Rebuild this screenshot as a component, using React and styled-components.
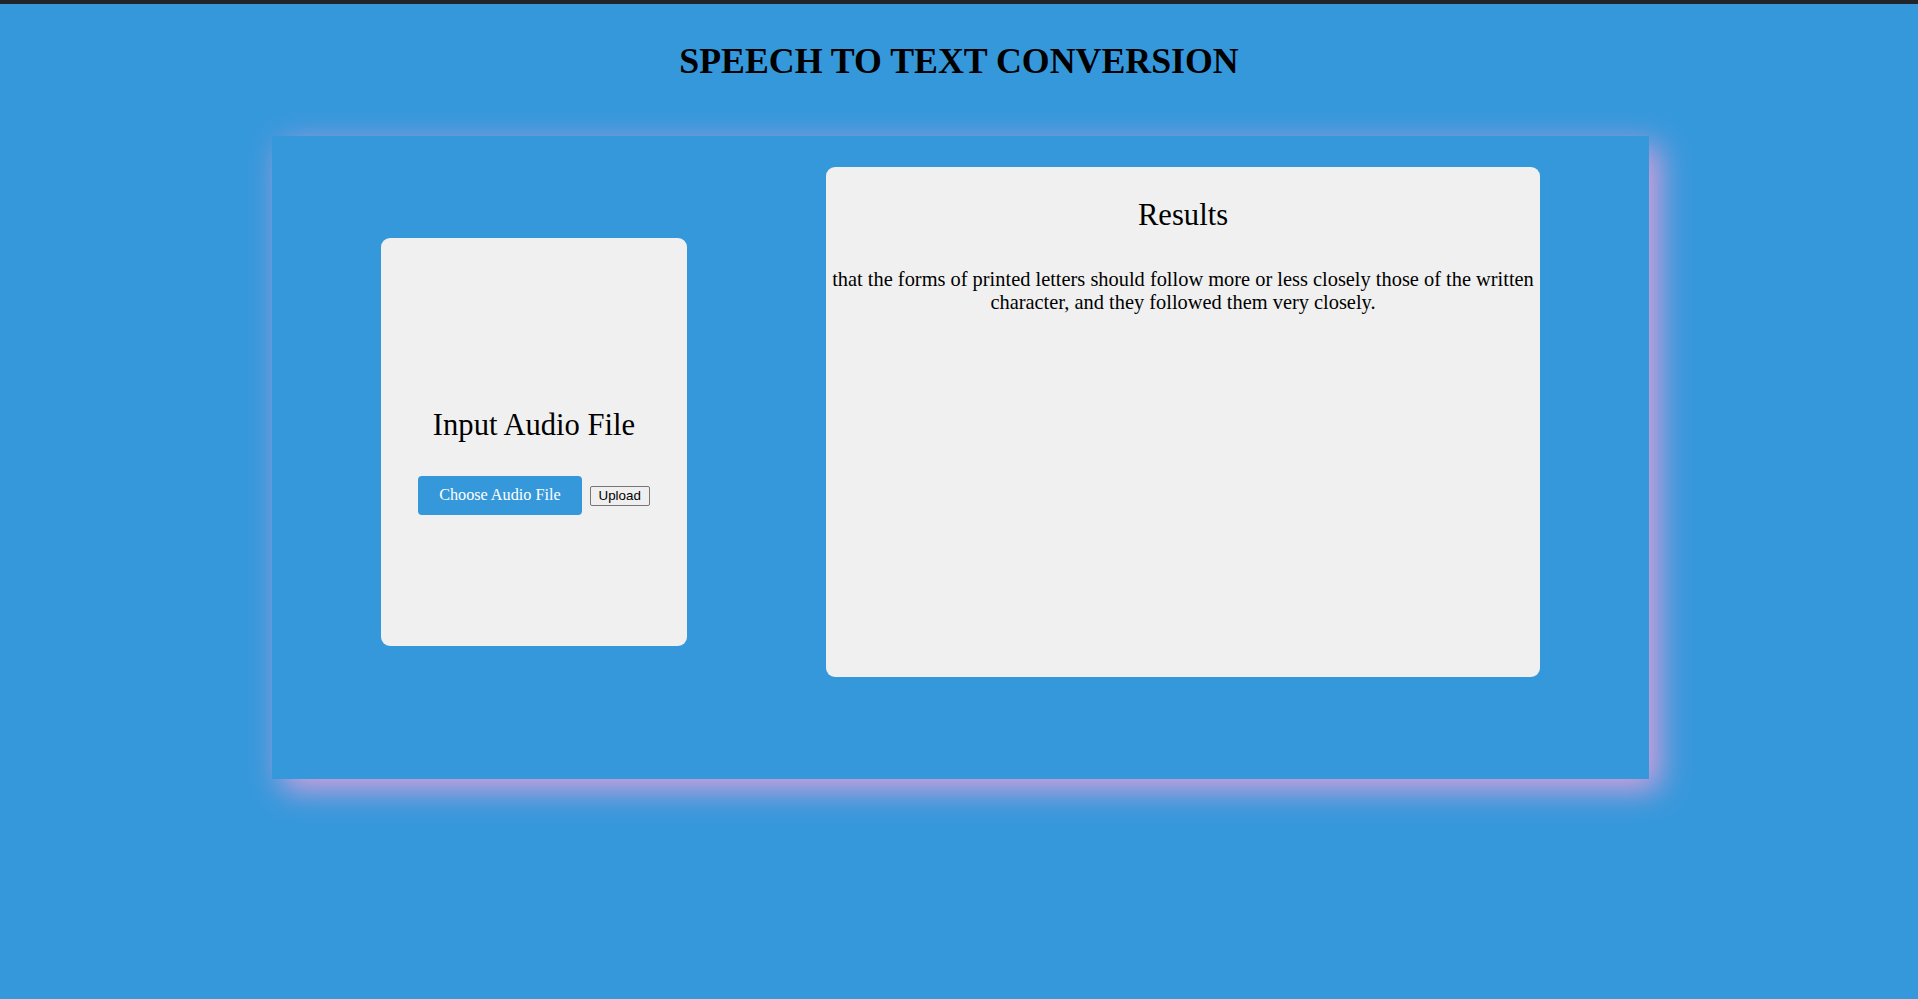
import React, {Component} from 'react'
import styled, {createGlobalStyle} from 'styled-components'

const GlobalStyle = createGlobalStyle`
  html, body {
    margin: 0;
    padding: 0;
    background-color: #3598db;
  }
  body {
    font-family: "Liberation Serif", "Times New Roman", serif;
    color: #000;
  }
`

const StyledPage = styled.div`
  min-height: 100vh;
  background-color: #3598db;
`
const StyledTopBar = styled.div`
  height: 4px;
  background-color: #212529;
`
const StyledTitle = styled.h1`
  margin: 37px 0 0;
  font-size: 35.8px;
  line-height: 40px;
  font-weight: bold;
  text-align: center;
`
const StyledPanel = styled.div`
  display: flex;
  align-items: flex-start;
  gap: 139px;
  box-sizing: border-box;
  width: 1377px;
  height: 643px;
  margin: 55px 0 0 calc(50% - 687px);
  padding: 31px 109px 0;
  background-color: #3598db;
  box-shadow: 10px 10px 30px plum;
`
const StyledCard = styled.div`
  display: flex;
  flex-direction: column;
  align-items: center;
  box-sizing: border-box;
  width: ${props => props.width}px;
  height: ${props => props.height}px;
  margin-top: ${props => props.offset || 0}px;
  padding: ${props => props.padding};
  border-radius: 9px;
  background-color: #f0f0f0;
`
const StyledHeading = styled.h2`
  margin: 0;
  font-size: 30.6px;
  line-height: 33px;
  font-weight: normal;
  text-align: center;
`
const StyledButtonRow = styled.div`
  display: flex;
  align-items: center;
  gap: 8px;
  margin-top: 34px;
`
const StyledChooseButton = styled.label`
  display: flex;
  align-items: center;
  height: 39px;
  padding: 0 21px;
  box-sizing: border-box;
  border-radius: 4px;
  background-color: #3598db;
  color: white;
  font-size: 16.2px;
  cursor: pointer;

  input {
    display: none;
  }
`
const StyledUploadButton = styled.button`
  height: 20px;
  padding: 0 8px;
  border: 1px solid #767676;
  border-radius: 2px;
  background-color: #efefef;
  color: #000;
  font-family: "Liberation Sans", Arial, sans-serif;
  font-size: 13.333px;
  font-weight: normal;
`
const StyledResultText = styled.p`
  margin: 36px 0 0;
  font-size: 20.4px;
  line-height: 23px;
  text-align: center;
`

export default class App extends Component {
  state = {
    fileName: '',
    result: 'that the forms of printed letters should follow more or less closely those of the written character, and they followed them very closely.'
  }

  onFileChange = (e) => {
    const file = e.target.files[0]
    this.setState({
      fileName: file ? file.name : ''
    })
  }

  render () {
    const {result} = this.state

    return (
      <StyledPage>
        <GlobalStyle />
        <StyledTopBar />
        <StyledTitle>SPEECH TO TEXT CONVERSION</StyledTitle>
        <StyledPanel>
          <StyledCard width={306} height={408} offset={71} padding="171px 0 0">
            <StyledHeading>Input Audio File</StyledHeading>
            <StyledButtonRow>
              <StyledChooseButton>
                Choose Audio File
                <input type="file" accept="audio/*" onChange={this.onFileChange} />
              </StyledChooseButton>
              <StyledUploadButton type="button">Upload</StyledUploadButton>
            </StyledButtonRow>
          </StyledCard>
          <StyledCard width={714} height={510} padding="32px 6px 0">
            <StyledHeading>Results</StyledHeading>
            <StyledResultText>{result}</StyledResultText>
          </StyledCard>
        </StyledPanel>
      </StyledPage>
    )
  }
}
